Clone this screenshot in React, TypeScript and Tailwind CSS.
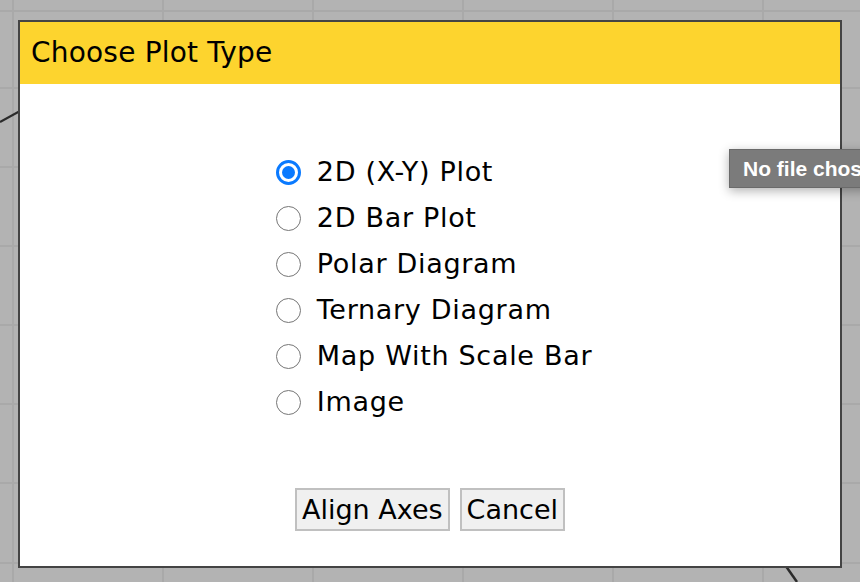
import React, { useState } from 'react'

const options = [
  '2D (X-Y) Plot',
  '2D Bar Plot',
  'Polar Diagram',
  'Ternary Diagram',
  'Map With Scale Bar',
  'Image',
]

function Radio({ checked }: { checked: boolean }) {
  if (checked) {
    return (
      <span className="flex h-[25px] w-[25px] shrink-0 items-center justify-center rounded-full border-[3px] border-[#0a7aff] bg-white">
        <span className="h-[13px] w-[13px] rounded-full bg-[#0a7aff]" />
      </span>
    )
  }
  return <span className="h-[25px] w-[25px] shrink-0 rounded-full border-[1.5px] border-[#767676] bg-white" />
}

function Backdrop() {
  const cols = [13, 163, 313, 463, 613, 763]
  const rows = [11, 88, 167, 246, 325, 404, 483, 563]
  return (
    <svg className="absolute inset-0" width="860" height="582" viewBox="0 0 860 582">
      <rect width="860" height="582" fill="#b3b3b3" />
      {cols.map((x) => (
        <line key={'c' + x} x1={x} y1="0" x2={x} y2="582" stroke="#a9a9a9" strokeWidth="2" />
      ))}
      {rows.map((y) => (
        <line key={'r' + y} x1="0" y1={y} x2="860" y2={y} stroke="#a9a9a9" strokeWidth="2" />
      ))}
      <path d="M0 122 L20 111" stroke="#2b2b2b" strokeWidth="2" fill="none" />
      <path d="M783 562 Q790 572 797 582" stroke="#2b2b2b" strokeWidth="2.5" fill="none" />
    </svg>
  )
}

export default function App() {
  const [selected, setSelected] = useState(0)

  return (
    <div
      className="relative h-[582px] w-[860px] overflow-hidden"
      style={{ fontFamily: '"DejaVu Sans", Verdana, sans-serif' }}
    >
      <Backdrop />

      {/* Dialog */}
      <div className="relative ml-[18px] mt-[20px] flex h-[548px] w-[824px] flex-col border-2 border-[#444] bg-white">
        <div className="flex h-[62px] items-center bg-[#fdd42e] pl-[11px] text-[28px] tracking-[0.2px] text-black">
          Choose Plot Type
        </div>

        <div className="flex flex-1 flex-col items-center">
          <div className="ml-[8px] mt-[65px] flex flex-col">
            {options.map((label, i) => (
              <label
                key={label}
                className="flex h-[46px] cursor-pointer items-center gap-[16px] text-[27px] tracking-[0.7px] text-black"
                onClick={() => setSelected(i)}
              >
                <Radio checked={selected === i} />
                <span>{label}</span>
              </label>
            ))}
          </div>

          <div className="mt-[63px] flex gap-[10px]">
            <button className="h-[43px] border-2 border-[#c0c0c0] bg-[#f0f0f0] px-[5px] text-[27px] text-black">
              Align Axes
            </button>
            <button className="h-[43px] border-2 border-[#c0c0c0] bg-[#f0f0f0] px-[5px] text-[27px] text-black">
              Cancel
            </button>
          </div>
        </div>
      </div>

      {/* Tooltip over the file input */}
      <div
        className="absolute left-[729px] top-[149px] flex h-[39px] items-center whitespace-nowrap border border-[#6a6a6a] bg-[#7b7b7b] pl-[13px] pr-[8px] text-[21px] font-bold text-white shadow-[0_3px_10px_rgba(0,0,0,0.3)]"
        style={{ fontFamily: '"Liberation Sans", Arial, sans-serif' }}
      >
        No file chosen
      </div>
    </div>
  )
}
